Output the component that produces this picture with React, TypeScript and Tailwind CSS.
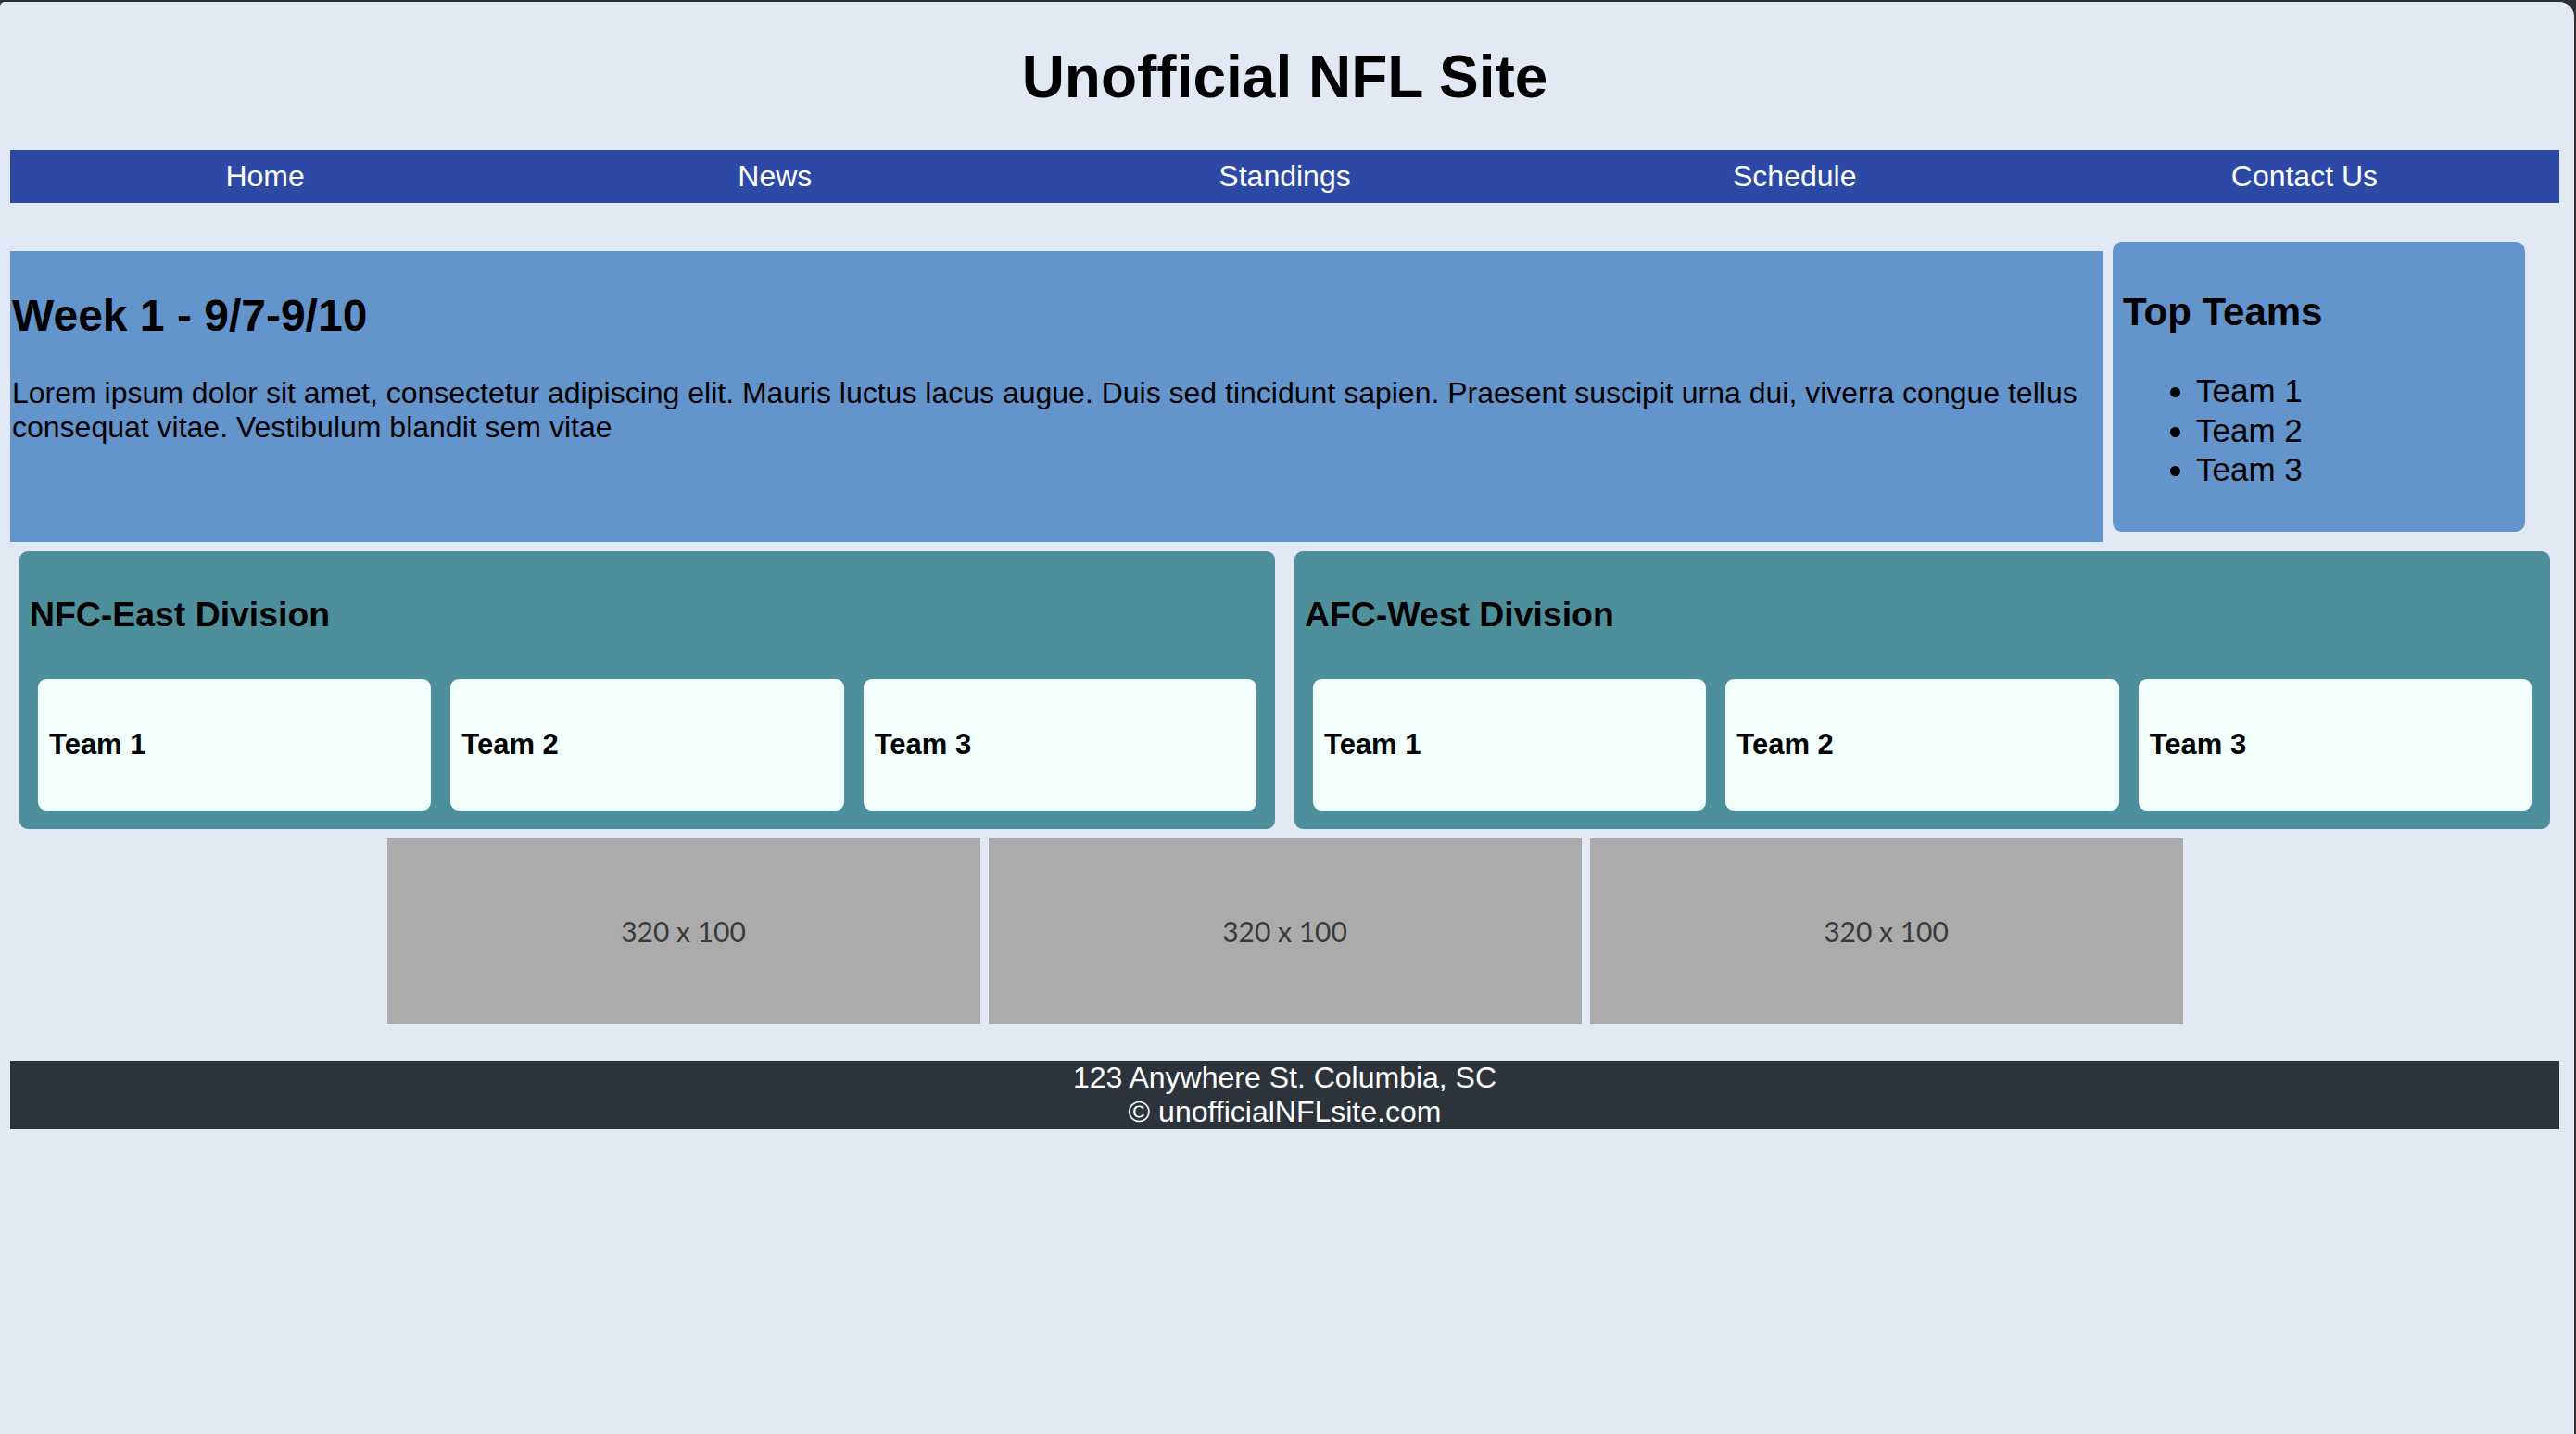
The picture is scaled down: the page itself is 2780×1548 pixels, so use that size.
import React from "react";

const navItems = ["Home", "News", "Standings", "Schedule", "Contact Us"];

function Division({ title }: { title: string }) {
  return (
    <div className="w-[1355px] h-[300px] rounded-[9px] bg-[#4e8f9c] px-[11px]">
      <h3 className="mt-[47px] mb-[48px] text-[37.4px] leading-[43px] font-bold text-black">{title}</h3>
      <div className="grid grid-cols-3 gap-[21px] px-[9px]">
        {["Team 1", "Team 2", "Team 3"].map((t) => (
          <div key={t} className="h-[142px] rounded-[9px] bg-[#f3fffd] flex items-center pl-[12px]">
            <span className="text-[31px] leading-[36px] font-bold text-black">{t}</span>
          </div>
        ))}
      </div>
    </div>
  );
}

export default function App() {
  return (
    <div className="w-[2780px] h-[1548px] bg-[#2e3033] pt-[2px] pr-[2px] overflow-hidden">
      <div
        className="h-full bg-[#e2e9f4] rounded-tl-[5px] rounded-tr-[16px] pl-[11px] pr-[16px] pt-[44px] text-black"
        style={{ fontFamily: '"Liberation Sans", Arial, sans-serif' }}
      >
        <h1 className="text-center text-[64px] leading-[74px] font-bold">Unofficial NFL Site</h1>

        <nav className="mt-[42px] flex h-[57px] items-center bg-[#2d49a6]">
          {navItems.map((n) => (
            <div key={n} className="flex-1 text-center text-white text-[32px] leading-[37px]">
              {n}
            </div>
          ))}
        </nav>

        <div className="mt-[42px] flex items-start gap-[10px]">
          <main className="mt-[10px] w-[2259px] h-[314px] bg-[#6394cc] pl-[2px]">
            <h2 className="mt-[42px] mb-[38px] text-[48px] leading-[55px] font-bold">Week 1 - 9/7-9/10</h2>
            <p className="text-[32px] leading-[37px]">
              Lorem ipsum dolor sit amet, consectetur adipiscing elit. Mauris luctus lacus augue. Duis sed tincidunt
              sapien. Praesent suscipit urna dui, viverra congue tellus consequat vitae. Vestibulum blandit sem vitae
            </p>
          </main>
          <aside className="w-[445px] h-[313px] rounded-[10px] bg-[#6394cc] pl-[11px]">
            <h2 className="mt-[53px] text-[42px] leading-[46px] font-bold">Top Teams</h2>
            <ul className="mt-[41px] list-disc pl-[79px] text-[35px] leading-[42.5px]">
              <li>Team 1</li>
              <li>Team 2</li>
              <li>Team 3</li>
            </ul>
          </aside>
        </div>

        <div className="mt-[10px] flex gap-[21px] px-[10px]">
          <Division title="NFC-East Division" />
          <Division title="AFC-West Division" />
        </div>

        <div className="mt-[10px] flex justify-center gap-[9px]">
          {[0, 1, 2].map((i) => (
            <div key={i} className="w-[640px] h-[200px] bg-[#ababab] flex items-center justify-center">
              <span
                className="text-[30px] text-[#3a3a3a]"
                style={{ fontFamily: 'Lato, "Open Sans", sans-serif' }}
              >
                320 x 100
              </span>
            </div>
          ))}
        </div>

        <footer className="mt-[40px] h-[74px] bg-[#2d333b] text-center text-white text-[32px] leading-[37px]">
          <div>123 Anywhere St. Columbia, SC</div>
          <div>© unofficialNFLsite.com</div>
        </footer>
      </div>
    </div>
  );
}
